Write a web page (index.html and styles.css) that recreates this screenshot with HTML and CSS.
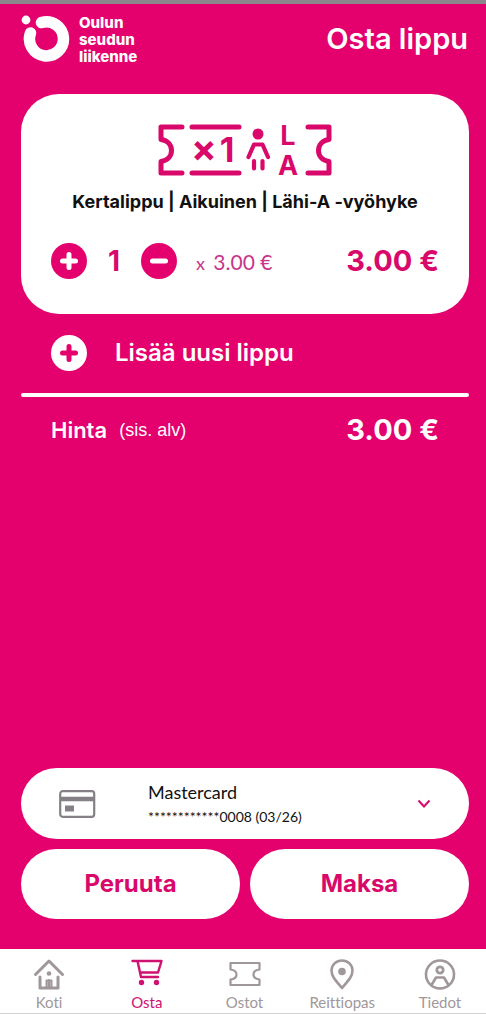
FILE: index.html
```html
<!DOCTYPE html>
<html lang="fi">
<head>
<meta charset="utf-8">
<meta name="viewport" content="width=device-width, initial-scale=1">
<title>Osta lippu</title>
<link rel="stylesheet" href="styles.css">
</head>
<body>
<div class="app">
  <header class="header">
    <div class="brand">
      <svg class="brand-mark" width="50" height="50" viewBox="0 0 50 50" aria-hidden="true">
        <circle cx="5" cy="6" r="4.4" fill="currentColor"/>
        <path d="M20.500 8.600A17 17 0 1 1 9.500 19" fill="none" stroke="currentColor" stroke-width="11.500" stroke-linecap="round"/>
      </svg>
      <p class="brand-name">Oulun<br>seudun<br>liikenne</p>
    </div>
    <h1 class="title">Osta lippu</h1>
  </header>

  <main class="main">
    <section class="ticket">
      <svg class="ticket-art" width="176" height="74" viewBox="0 -10 176 74" aria-hidden="true">
        <g fill="none" stroke="currentColor" stroke-width="5" stroke-linecap="round" stroke-linejoin="round">
          <path d="M25 4H4v12.500c7 1 10.500 5.500 10.500 11S11 37.500 4 38.500V50h21"/>
          <path d="M35 4h47M35 50h47"/>
          <path d="M151 4h21v12.500c-7 1-10.500 5.500-10.500 11s3.500 10 10.500 11V50h-21"/>
          <path d="M91.500 34l5.500-12.500h8.500l5.500 12.500M97 38v7.500M105.500 38v7.500" stroke-width="4.200"/>
        </g>
        <circle cx="101" cy="11" r="5.500" fill="currentColor"/>
        <g class="ticket-text" fill="currentColor">
          <text x="47" y="39" font-size="38" text-anchor="middle">×</text>
          <text x="70" y="39" font-size="34" text-anchor="middle">1</text>
          <text x="131" y="22" font-size="27" text-anchor="middle">L</text>
          <text x="131" y="52" font-size="27" text-anchor="middle">A</text>
        </g>
      </svg>
      <h2 class="ticket-name">Kertalippu | Aikuinen | Lähi-A -vyöhyke</h2>
      <div class="ticket-row">
        <button class="round" type="button" aria-label="Lisää yksi">
          <svg width="18" height="18" viewBox="0 0 18 18" aria-hidden="true"><path d="M9 2.500v13M2.500 9h13"/></svg>
        </button>
        <span class="count">1</span>
        <button class="round" type="button" aria-label="Vähennä yksi">
          <svg width="18" height="18" viewBox="0 0 18 18" aria-hidden="true"><path d="M2.500 9h13"/></svg>
        </button>
        <span class="unit"><span class="times">x</span> 3.00 €</span>
        <strong class="price">3.00 €</strong>
      </div>
    </section>

    <button class="add" type="button">
      <span class="round round-light">
        <svg width="18" height="18" viewBox="0 0 18 18" aria-hidden="true"><path d="M9 2.500v13M2.500 9h13"/></svg>
      </span>
      <span>Lisää uusi lippu</span>
    </button>
    <hr class="rule">
    <div class="total">
      <strong class="total-label">Hinta</strong>
      <span class="vat">(sis. alv)</span>
      <strong class="price">3.00 €</strong>
    </div>

    <div class="checkout">
      <button class="card" type="button" aria-haspopup="listbox">
        <svg class="card-icon" width="37" height="28" viewBox="0 0 37 28" fill="none" stroke="currentColor" aria-hidden="true">
          <rect x="1.200" y="1.200" width="34" height="25.600" rx="2.500" stroke-width="2.200"/>
          <path d="M1 9h34" stroke-width="4.500"/>
          <path d="M6 18.500h9" stroke-width="6"/>
        </svg>
        <span class="card-text">
          <span class="card-name">Mastercard</span>
          <span class="card-number">************0008 (03/26)</span>
        </span>
        <svg class="chevron" width="14" height="10" viewBox="0 0 14 10" fill="none" stroke="currentColor" stroke-width="2" aria-hidden="true"><path d="M1.500 1.500L7 7.500l5.500-6"/></svg>
      </button>
      <div class="actions">
        <button class="action" type="button">Peruuta</button>
        <button class="action" type="button">Maksa</button>
      </div>
    </div>
  </main>

  <nav class="tabs">
    <a class="tab" href="#koti">
      <svg width="32" height="32" viewBox="0 0 32 32" aria-hidden="true"><path d="M2.500 16.500L16 3l13.500 13.500M7 19v11h18V19M16 22.500V30" stroke-width="3"/><path d="M13.500 30v-7.500h5V30" stroke-width="2"/><circle class="dot" cx="16" cy="15.500" r="2.300"/></svg>
      <span>Koti</span>
    </a>
    <a class="tab tab-active" href="#osta" aria-current="page">
      <svg width="32" height="32" viewBox="0 0 32 32" aria-hidden="true"><path d="M1.500 3h29l-3.500 11.500H9.500M6.500 3L10 19h17" stroke-width="2.400"/><circle class="dot" cx="10.500" cy="24.500" r="2.700"/><circle class="dot" cx="25.500" cy="24.500" r="2.700"/></svg>
      <span>Osta</span>
    </a>
    <a class="tab" href="#ostot">
      <svg width="32" height="32" viewBox="0 0 32 32" aria-hidden="true"><path d="M1.500 5h29v6.500c-4 .5-6 2.500-6 5s2 4.500 6 5V27h-29v-5.500c4-.5 6-2.500 6-5s-2-4.500-6-5z" stroke-width="2.200"/></svg>
      <span>Ostot</span>
    </a>
    <a class="tab" href="#reittiopas">
      <svg width="32" height="32" viewBox="0 0 32 32" aria-hidden="true"><path d="M16 30C10 23 5.500 18.500 5.500 12.500a10.500 10 0 0 1 21 0C26.500 18.500 22 23 16 30z" stroke-width="2.600"/><circle class="dot" cx="16" cy="13.500" r="3.800"/></svg>
      <span>Reittiopas</span>
    </a>
    <a class="tab" href="#tiedot">
      <svg width="32" height="32" viewBox="0 0 32 32" aria-hidden="true"><circle cx="16" cy="16.500" r="14" stroke-width="2.600"/><circle cx="16" cy="12" r="3.200" stroke-width="2.800"/><path d="M7.500 27l4.500-7.500h8l4.500 7.500" stroke-width="2.600"/></svg>
      <span>Tiedot</span>
    </a>
  </nav>
</div>
</body>
</html>
```
FILE: styles.css
```css
:root {
  --pink: #e4006d;
  --ink-pink: #d8096a;
  --grey: #a0979a;
  --strong: Inter, "Open Sans", sans-serif;
}

* {
  box-sizing: border-box;
}

body {
  margin: 0;
  font-family: Lato, "Open Sans", sans-serif;
  font-variant-ligatures: none;
  background: var(--pink);
  color: #fff;
}

h1,
h2,
p {
  margin: 0;
}

h1,
h2,
strong {
  font-family: var(--strong);
  font-weight: 600;
}

button {
  margin: 0;
  padding: 0;
  border: 0;
  background: none;
  color: inherit;
  font: inherit;
  cursor: pointer;
}

.app {
  display: flex;
  flex-direction: column;
  min-height: 100vh;
  border-top: 4px solid #8b868c;
}

.header {
  display: flex;
  align-items: flex-start;
  justify-content: space-between;
  padding: 10px 18px 29px 21px;
}

.brand {
  display: flex;
  gap: 8px;
}

.brand-name {
  font: 800 15px/17px var(--strong);
}

.title {
  padding-top: 8px;
  font-size: 29px;
  line-height: 34px;
}

.main {
  display: flex;
  flex: 1;
  flex-direction: column;
  padding: 0 17px 30px 21px;
}

.ticket {
  padding: 19px 30px 35px;
  border-radius: 38px;
  background: #fff;
  color: var(--ink-pink);
}

.ticket-art {
  display: block;
  margin: 0 auto 3px;
}

.ticket-text {
  font-family: Inter, sans-serif;
  font-weight: 700;
}

.ticket-name {
  color: #111;
  font-size: 18px;
  font-weight: 700;
  line-height: 24px;
  text-align: center;
}

.ticket-row {
  display: flex;
  align-items: center;
  margin-top: 29px;
}

.round {
  display: flex;
  flex: none;
  align-items: center;
  justify-content: center;
  width: 36px;
  height: 36px;
  border-radius: 50%;
  background: var(--pink);
  color: #fff;
}

.round svg {
  fill: none;
  stroke: currentColor;
  stroke-width: 5;
  stroke-linecap: round;
}

.round-light {
  background: #fff;
  color: var(--pink);
}

.count {
  width: 54px;
  font: 700 28px/36px var(--strong);
  text-align: center;
}

.unit {
  margin-left: 19px;
  color: #c9358a;
  font-size: 21px;
}

.times {
  margin-right: 3px;
  font-size: 18px;
}

.price {
  margin-left: auto;
  font-size: 29px;
  font-weight: 700;
  line-height: 36px;
}

.add {
  display: flex;
  align-items: center;
  gap: 28px;
  padding: 21px 30px 22px;
  font: 600 24px/34px var(--strong);
}

.rule {
  width: 100%;
  height: 4px;
  margin: 0;
  border: 0;
  border-radius: 2px;
  background: #fff;
}

.total {
  display: flex;
  align-items: center;
  gap: 12px;
  padding: 15px 30px;
}

.total-label {
  font-size: 22px;
}

.vat {
  font: 18px/24px "Liberation Sans", sans-serif;
}

.checkout {
  display: grid;
  gap: 10px;
  margin-top: auto;
}

.card {
  display: flex;
  align-items: center;
  min-height: 71px;
  padding: 8px 38px;
  border-radius: 36px;
  background: #fff;
  color: #111;
  text-align: left;
}

.card-icon {
  flex: none;
  color: #858085;
}

.card-text {
  display: grid;
  flex: 1;
  margin-left: 52px;
}

.card-name {
  font-size: 18px;
  line-height: 26px;
}

.card-number {
  font-size: 14px;
  line-height: 24px;
}

.chevron {
  color: var(--ink-pink);
}

.actions {
  display: grid;
  grid-template-columns: 1fr 1fr;
  gap: 10px;
}

.action {
  min-height: 70px;
  border-radius: 35px;
  background: #fff;
  color: var(--ink-pink);
  font: 700 24px/30px var(--strong);
}

.tabs {
  display: flex;
  justify-content: space-between;
  padding: 9px 8px 2px 11px;
  border-bottom: 1px solid #d5d2d4;
  background: #fff;
}

.tab {
  display: flex;
  flex-direction: column;
  align-items: center;
  gap: 3px;
  width: 76px;
  color: var(--grey);
  font-size: 15px;
  line-height: 18px;
  text-decoration: none;
}

.tab svg {
  fill: none;
  stroke: currentColor;
  stroke-linecap: round;
  stroke-linejoin: round;
}

.tab .dot {
  fill: currentColor;
  stroke: none;
}

.tab-active {
  color: #cf1272;
}
```
